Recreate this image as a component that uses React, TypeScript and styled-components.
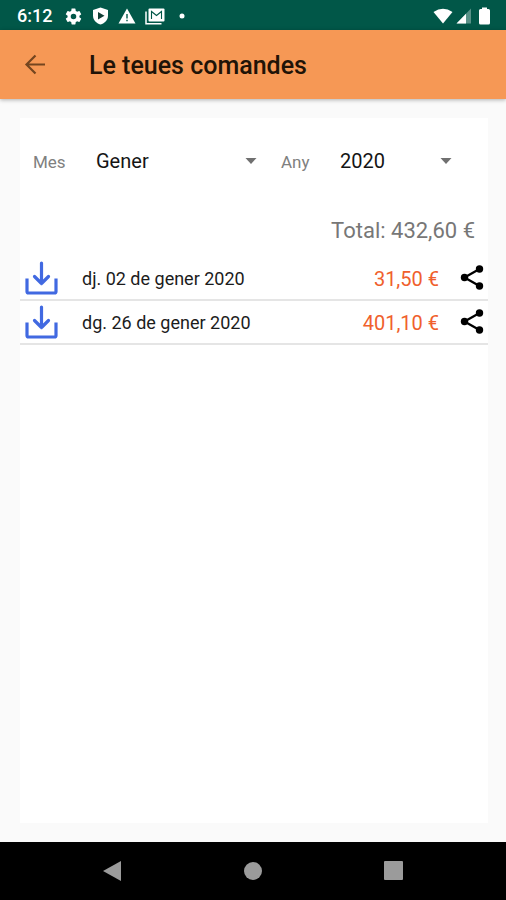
import React from "react";
import styled, { createGlobalStyle } from "styled-components";

const GlobalStyle = createGlobalStyle`
  *, *::before, *::after { box-sizing: border-box; }
  body { margin: 0; background: #fafafa; font-family: Roboto, "Liberation Sans", sans-serif; }
  button, select { font-family: inherit; color: inherit; }
`;

const Screen = styled.div`
  min-height: 100vh;
  display: flex;
  flex-direction: column;
`;

const StatusBar = styled.div`
  height: 30px;
  flex: none;
  display: flex;
  align-items: center;
  justify-content: space-between;
  padding: 2px 13px 0 17px;
  background: #015748;
  color: #fff;
`;

const StatusGroup = styled.div<{ $gap: number }>`
  display: flex;
  align-items: center;
  gap: ${(p) => p.$gap}px;
`;

const Clock = styled.span`
  font-size: 18px;
  line-height: 24px;
  font-weight: 500;
  margin-right: 3px;
`;

const AppBar = styled.header`
  height: 69px;
  flex: none;
  display: flex;
  align-items: center;
  gap: 36px;
  padding: 0 18px;
  background: #f69855;
  box-shadow: 0 1px 4px rgba(0, 0, 0, 0.3);
`;

const Title = styled.h1`
  margin: 0;
  padding-top: 2px;
  font-size: 25px;
  line-height: 32px;
  font-weight: 500;
  color: #201307;
`;

const IconButton = styled.button`
  display: flex;
  align-items: center;
  justify-content: center;
  padding: 0;
  border: 0;
  background: none;
  cursor: pointer;
`;

const Main = styled.main`
  flex: 1;
  display: flex;
  padding: 19px 18px 19px 20px;
`;

const Card = styled.section`
  flex: 1;
  min-width: 0;
  background: #fff;
`;

const Filters = styled.form`
  display: grid;
  grid-template-columns: 63px 23fr 83px 16fr;
  align-items: center;
  height: 86px;
  padding: 0 36px 0 13px;
`;

const FilterLabel = styled.label<{ $indent?: number }>`
  padding: 2px 0 0 ${(p) => p.$indent ?? 0}px;
  font-size: 17px;
  line-height: 24px;
  color: #808080;
`;

const SelectBox = styled.div`
  display: grid;
  grid-template-columns: 1fr 12px;
  align-items: center;
  min-width: 0;

  svg { grid-area: 1 / 2; pointer-events: none; }
`;

const Select = styled.select`
  grid-area: 1 / 1 / 2 / 3;
  width: 100%;
  height: 40px;
  padding: 0;
  border: 0;
  background: none;
  appearance: none;
  font-size: 20px;
  color: #151515;
`;

const Total = styled.p`
  margin: 0;
  padding: 11px 13px 10px;
  font-size: 22px;
  line-height: 32px;
  text-align: right;
  color: #777;
`;

const OrderList = styled.ul`
  margin: 0;
  padding: 0;
  list-style: none;
`;

const OrderRow = styled.li`
  display: flex;
  align-items: center;
  height: 44px;
  padding: 0 3px 0 4px;
  border-bottom: 2px solid #e5e5e5;
`;

const OrderDate = styled.span`
  flex: 1;
  padding: 2px 0 0 22px;
  font-size: 18px;
  line-height: 24px;
  color: #1c1c1c;
`;

const Amount = styled.span`
  padding: 2px 20px 0 0;
  font-size: 20px;
  line-height: 24px;
  color: #f0602c;
`;

const NavBar = styled.nav`
  height: 58px;
  flex: none;
  display: flex;
  align-items: center;
  justify-content: space-between;
  padding: 0 101px 0 100px;
  background: #000;
`;

const Caret = () => (
  <svg width="12" height="6" viewBox="0 0 12 6" aria-hidden="true">
    <path d="M0.500 0h11L6 6z" fill="#707070" />
  </svg>
);

const DownloadIcon = () => (
  <svg width="36" height="36" viewBox="0 0 36 36" fill="none" stroke="#4169e1" strokeWidth="3.2" strokeLinecap="round" strokeLinejoin="round">
    <path d="M17.500 3v20.500M10.500 16.500l7 7 7-7" />
    <path d="M3 18.500v13q0 1.500 1.500 1.500h26q1.500 0 1.500-1.500v-13" strokeLinecap="butt" />
  </svg>
);

const ShareIcon = () => (
  <svg width="26" height="26" viewBox="0 0 26 26" fill="#000">
    <path d="M20.500 4L5.500 12.500L20.500 21" fill="none" stroke="#000" strokeWidth="2.300" />
    <circle cx="20.500" cy="4" r="3.700" />
    <circle cx="5.500" cy="12.500" r="3.700" />
    <circle cx="20.500" cy="21" r="3.700" />
  </svg>
);

const GearIcon = () => (
  <svg width="19" height="19" viewBox="0 0 24 24" fill="currentColor">
    <path d="M19.430 12.980c.04-.32.07-.64.07-.98s-.03-.66-.07-.98l2.110-1.650c.19-.15.24-.42.12-.64l-2-3.460c-.12-.22-.39-.3-.61-.22l-2.490 1c-.52-.4-1.080-.73-1.690-.98l-.38-2.650A.488.488 0 0 0 14 2h-4c-.25 0-.46.18-.49.42l-.38 2.650c-.61.25-1.170.59-1.690.98l-2.490-1c-.23-.09-.49 0-.61.22l-2 3.460c-.13.22-.07.49.12.64l2.110 1.650c-.04.32-.07.65-.07.98s.03.66.07.98l-2.110 1.650c-.19.15-.24.42-.12.64l2 3.460c.12.22.39.3.61.22l2.490-1c.52.4 1.080.73 1.690.98l.38 2.650c.03.24.24.42.49.42h4c.25 0 .46-.18.49-.42l.38-2.650c.61-.25 1.170-.59 1.690-.98l2.490 1c.23.09.49 0 .61-.22l2-3.460c.12-.22.07-.49-.12-.64zM12 15.500A3.500 3.500 0 1 1 12 8.500a3.500 3.500 0 0 1 0 7z" />
  </svg>
);

const ShieldIcon = () => (
  <svg width="17" height="18" viewBox="0 0 17 18">
    <path d="M8.500 0.500L16 3v5.500c0 4.500-3.200 7.800-7.500 9C4.200 16.300 1 13 1 8.500V3z" fill="currentColor" />
    <path d="M6 5l6.500 3.700L6 12.400z" fill="#123f36" />
  </svg>
);

const WarningIcon = () => (
  <svg width="18" height="16" viewBox="0 0 18 16">
    <path d="M9 0.500L17.500 15.500H0.500z" fill="currentColor" />
    <path d="M8.300 6h1.400v4.500H8.300zM8.300 11.800h1.400v1.500H8.300z" fill="#015748" />
  </svg>
);

const MailIcon = () => (
  <svg width="20" height="17" viewBox="0 0 20 17" fill="none">
    <path d="M1 3.500v12.300h15.500" stroke="currentColor" strokeWidth="1.500" />
    <rect x="3.500" y="0.500" width="16" height="13" rx="1" fill="currentColor" />
    <path d="M6.500 11V3.500l5 4 5-4V11" stroke="#015748" strokeWidth="1.100" />
  </svg>
);

const orders = [
  { date: "dj. 02 de gener 2020", amount: "31,50 €" },
  { date: "dg. 26 de gener 2020", amount: "401,10 €" },
];

export default function App() {
  return (
    <>
      <GlobalStyle />
      <Screen>
        <StatusBar>
          <StatusGroup $gap={9}>
            <Clock>6:12</Clock>
            <GearIcon />
            <ShieldIcon />
            <WarningIcon />
            <MailIcon />
            <svg width="12" height="6" viewBox="0 0 12 6">
              <circle cx="8" cy="3" r="2.500" fill="currentColor" />
            </svg>
          </StatusGroup>
          <StatusGroup $gap={3}>
            <svg width="20" height="16" viewBox="0 0 20 16">
              <path d="M0.500 4Q10-2.500 19.500 4L10 15.500z" fill="currentColor" />
            </svg>
            <svg width="16" height="16" viewBox="0 0 16 16">
              <path d="M0.500 15.500L15 0.500v15z" fill="#fff" fillOpacity="0.350" />
              <path d="M0.500 15.500L10 5.700v9.800z" fill="currentColor" />
            </svg>
            <svg width="18" height="18" viewBox="0 0 18 18">
              <path d="M7 2V0.500h5V2h1.500Q15 2 15 3.500v12.500q0 1.500-1.500 1.500h-8Q4 17.500 4 16V3.500Q4 2 5.500 2z" fill="currentColor" />
            </svg>
          </StatusGroup>
        </StatusBar>

        <AppBar>
          <IconButton type="button" aria-label="Enrere">
            <svg width="35" height="35" viewBox="0 0 35 35" fill="none" stroke="#74451f" strokeWidth="2.200">
              <path d="M27 17.500H9M17.500 8.500l-9 9 9 9" />
            </svg>
          </IconButton>
          <Title>Le teues comandes</Title>
        </AppBar>

        <Main>
          <Card>
            <Filters>
              <FilterLabel htmlFor="month">Mes</FilterLabel>
              <SelectBox>
                <Select id="month" defaultValue="Gener">
                  <option>Gener</option>
                </Select>
                <Caret />
              </SelectBox>
              <FilterLabel htmlFor="year" $indent={24}>Any</FilterLabel>
              <SelectBox>
                <Select id="year" defaultValue="2020">
                  <option>2020</option>
                </Select>
                <Caret />
              </SelectBox>
            </Filters>

            <Total>Total: 432,60 €</Total>

            <OrderList>
              {orders.map((order) => (
                <OrderRow key={order.date}>
                  <IconButton type="button" aria-label={`Descarrega ${order.date}`}>
                    <DownloadIcon />
                  </IconButton>
                  <OrderDate>{order.date}</OrderDate>
                  <Amount>{order.amount}</Amount>
                  <IconButton type="button" aria-label={`Comparteix ${order.date}`}>
                    <ShareIcon />
                  </IconButton>
                </OrderRow>
              ))}
            </OrderList>
          </Card>
        </Main>

        <NavBar>
          <IconButton type="button" aria-label="Torna">
            <svg width="22" height="22" viewBox="0 0 22 22">
              <path d="M21 1v20L3 11z" fill="#9b9b9b" />
            </svg>
          </IconButton>
          <IconButton type="button" aria-label="Inici">
            <svg width="20" height="20" viewBox="0 0 20 20">
              <circle cx="10" cy="10" r="9" fill="#9b9b9b" />
            </svg>
          </IconButton>
          <IconButton type="button" aria-label="Recents">
            <svg width="22" height="22" viewBox="0 0 22 22">
              <rect x="1" y="1" width="19" height="19" rx="1" fill="#9b9b9b" />
            </svg>
          </IconButton>
        </NavBar>
      </Screen>
    </>
  );
}
